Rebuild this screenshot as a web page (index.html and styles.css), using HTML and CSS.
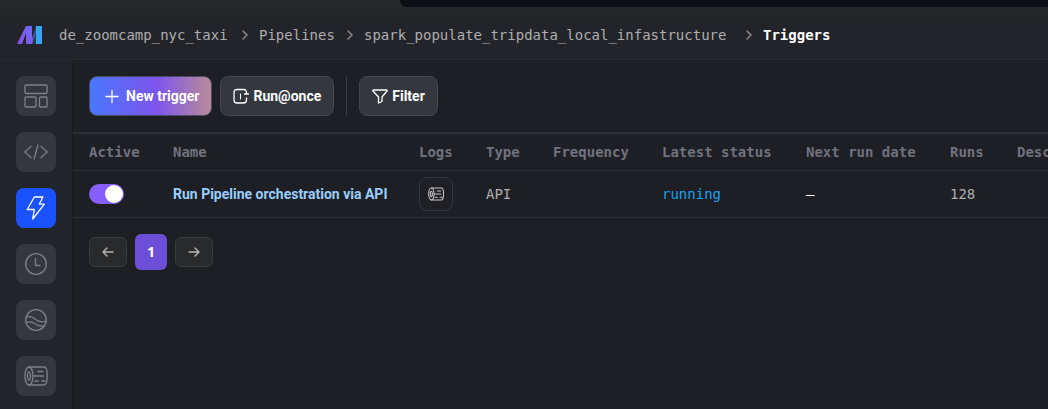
FILE: index.html
```html
<!DOCTYPE html>
<html lang="en">
<head>
<meta charset="utf-8">
<meta name="viewport" content="width=device-width, initial-scale=1">
<title>Triggers</title>
<link rel="stylesheet" href="styles.css">
</head>
<body>
<svg class="symbols" aria-hidden="true">
  <symbol id="log" viewBox="0 0 24 24">
    <ellipse cx="5" cy="12" rx="4" ry="9"/>
    <ellipse cx="5" cy="12" rx="1.500" ry="4"/>
    <path d="M5 3h15c2.600 0 3.300 4.500 3.300 9s-.7 9-3.300 9H5M14 7.500h5M9.500 12h10M11 17h3M18 17h3"/>
  </symbol>
</svg>
<div class="app">
  <div class="tabstrip"></div>
  <header class="header">
    <a class="logo" href="#" aria-label="Home">
      <svg width="26" height="20" viewBox="0 0 26 20">
        <defs>
          <linearGradient id="leg" x1="0" y1="1" x2="1" y2="0"><stop offset="0" stop-color="#8a4fe8"/><stop offset="1" stop-color="#6c6cf5"/></linearGradient>
          <linearGradient id="fold" x1="0" y1="1" x2="1" y2="0"><stop offset="0" stop-color="#7960e8"/><stop offset="1" stop-color="#28476d"/></linearGradient>
        </defs>
        <path d="M12 19 19 2v17z" fill="#293750"/>
        <path d="M14 16 19 1v8l-4 10h-3z" fill="url(#fold)"/>
        <path d="M0 19 9 1h6v18H9V8L5 19z" fill="url(#leg)"/>
        <path d="M19 1h6v18h-6z" fill="#35a6f5"/>
      </svg>
    </a>
    <nav class="crumbs" aria-label="Breadcrumb">
      <a class="crumb crumb-project" href="#">de_zoomcamp_nyc_taxi</a>
      <svg class="sep" viewBox="0 0 8 12"><path d="m2 2 4 4-4 4"/></svg>
      <a class="crumb crumb-section" href="#">Pipelines</a>
      <svg class="sep" viewBox="0 0 8 12"><path d="m2 2 4 4-4 4"/></svg>
      <a class="crumb crumb-pipeline" href="#">spark_populate_tripdata_local_infastructure</a>
      <svg class="sep" viewBox="0 0 8 12"><path d="m2 2 4 4-4 4"/></svg>
      <a class="crumb current" href="#" aria-current="page">Triggers</a>
    </nav>
  </header>
  <div class="body">
    <nav class="sidebar" aria-label="Pipeline">
      <a class="side" href="#" aria-label="Overview"><svg viewBox="0 0 24 24"><rect x="1" y="1" width="22" height="8.500" rx="1"/><rect x="1" y="13" width="11" height="10" rx="1"/><rect x="15.500" y="13" width="7.500" height="10" rx="1"/></svg></a>
      <a class="side" href="#" aria-label="Edit"><svg viewBox="0 0 24 24"><path d="M7 6.500.8 12 7 17.500M17 6.500l6.200 5.500-6.200 5.500M14 5l-4 14"/></svg></a>
      <a class="side active" href="#" aria-label="Triggers"><svg viewBox="0 0 24 24"><path d="M10.300 1h8.500l-3.500 7.200h5L8.700 23l1.600-9.500h-7z"/></svg></a>
      <a class="side" href="#" aria-label="Runs"><svg viewBox="0 0 24 24"><circle cx="12" cy="12" r="10.300"/><path d="M11.500 6.500v7H16"/></svg></a>
      <a class="side" href="#" aria-label="Backfills"><svg viewBox="0 0 24 24"><circle cx="12" cy="12" r="10.300"/><path d="M2.500 9c5-1.500 7 1 10 3s6 2.500 9.500 1M2 14.500c4-1.500 6.500-.5 9 1.200s5.500 2.800 9 2.300"/></svg></a>
      <a class="side" href="#" aria-label="Logs"><svg><use href="#log"/></svg></a>
    </nav>
    <main class="main">
      <div class="toolbar">
        <button class="btn primary" type="button"><svg viewBox="0 0 16 16"><path d="M8 2.500v12M2 8.500h12"/></svg>New trigger</button>
        <button class="btn" type="button"><svg viewBox="0 0 16 16"><path d="M13.500 6V4.500c0-2-1-3-3-3H4c-2 0-3 1-3 3v7.500c0 2 1 3 3 3h6.500c2 0 3-1 3-3V10M11.500 6h4z"/><path d="M7.500 6v5" stroke-width="1"/></svg>Run@once</button>
        <span class="divider"></span>
        <button class="btn" type="button"><svg viewBox="0 0 16 16"><path d="M1 2h14v1l-5 6v4.500L6.500 15V9L1 3z"/></svg>Filter</button>
      </div>
      <div class="table-wrap">
        <table class="table">
          <colgroup><col class="c-active"><col class="c-name"><col class="c-small"><col class="c-small"><col class="c-freq"><col class="c-wide"><col class="c-wide"><col class="c-small"><col></colgroup>
          <thead><tr><th>Active</th><th>Name</th><th>Logs</th><th>Type</th><th>Frequency</th><th>Latest status</th><th>Next run date</th><th>Runs</th><th>Description</th></tr></thead>
          <tbody><tr>
            <td><input class="switch" type="checkbox" role="switch" aria-label="Active" checked></td>
            <td><a class="name" href="#">Run Pipeline orchestration via API</a></td>
            <td><button class="log-btn" type="button" aria-label="View logs"><svg><use href="#log"/></svg></button></td>
            <td>API</td><td></td><td class="running">running</td><td class="dash">–</td><td>128</td><td></td>
          </tr></tbody>
        </table>
      </div>
      <nav class="pager" aria-label="Pages">
        <button class="arrow" type="button" aria-label="Previous page"><svg viewBox="0 0 14 14"><path d="M12 7H2M6 3 2 7l4 4"/></svg></button>
        <button class="page" type="button" aria-current="page">1</button>
        <button class="arrow" type="button" aria-label="Next page"><svg viewBox="0 0 14 14"><path d="M2 7h10M8 3l4 4-4 4"/></svg></button>
      </nav>
    </main>
  </div>
</div>
</body>
</html>
```
FILE: styles.css
```css
* { box-sizing: border-box; }
body {
  margin: 0;
  background: #1e1f24;
  color: #aeaeb0;
  font: 14px/20px "DejaVu Sans Mono", monospace;
  overflow: hidden;
}
a { color: inherit; text-decoration: none; }
button { font: inherit; color: inherit; cursor: pointer; }
svg { display: block; fill: none; stroke: currentColor; stroke-linecap: round; stroke-linejoin: round; }
.symbols { position: absolute; width: 0; height: 0; }
.app { position: relative; min-height: 100vh; display: flex; flex-direction: column; }
.tabstrip {
  position: absolute;
  top: 0;
  left: 400px;
  right: 0;
  height: 7px;
  background: #0e0f14;
  border-bottom-left-radius: 6px;
}
.header {
  display: flex;
  align-items: center;
  gap: 16px;
  padding: 25px 16px 14px 17px;
  background: linear-gradient(#242a2d, #232429 24px);
  border-bottom: 1px solid #2a2b30;
}
.logo svg { stroke: none; }
.crumbs { display: flex; align-items: center; gap: 10px; white-space: nowrap; }
.crumb-project { min-width: 172px; }
.crumb-section { min-width: 77px; }
.crumb-pipeline { min-width: 371px; }
.sep { width: 8px; height: 12px; flex: none; stroke: #85868b; stroke-width: 1.6; }
.current { color: #fff; font-weight: bold; }
.body { flex: 1; display: flex; }
.sidebar {
  flex: none;
  display: flex;
  flex-direction: column;
  gap: 16px;
  padding: 16px 16px 12px;
  background: #232429;
  border-right: 1px solid #1a1b1f;
}
.side {
  display: grid;
  place-items: center;
  width: 40px;
  height: 40px;
  border-radius: 8px;
  background: #35373f;
  color: #7e8085;
}
.side svg { width: 24px; height: 24px; stroke-width: 1.3; }
.active { background: #1a52ff; color: #fff; }
.main { flex: 1; min-width: 0; }
.toolbar { display: flex; gap: 8px; padding: 16px; }
.btn {
  display: flex;
  align-items: center;
  gap: 4px;
  height: 40px;
  padding: 0 12px;
  border: 1px solid #44464e;
  border-radius: 8px;
  background: #35373f;
  color: #fff;
  font: bold 14px/20px Roboto, sans-serif;
}
.btn svg { width: 16px; height: 16px; stroke-width: 1.3; }
.primary {
  gap: 6px;
  padding: 0 12px 0 14px;
  border-color: #4b4c64;
  background: linear-gradient(90deg, #4877ff, #7d55ec 55%, #b98d96) border-box;
}
.divider { width: 1px; background: #393b42; margin: 0 4px; }
.table-wrap { overflow: hidden; border-top: 2px solid #2e3036; }
.table { width: 100%; table-layout: fixed; border-collapse: separate; border-spacing: 0; }
.c-active { width: 84px; }
.c-name { width: 246px; }
.c-small { width: 67px; }
.c-freq { width: 109px; }
.c-wide { width: 144px; }
.table th, .table td {
  padding: 0 0 0 16px;
  border-bottom: 1px solid #2e3036;
  text-align: left;
  white-space: nowrap;
}
.table th { height: 37px; color: #70727e; }
.table td { height: 47px; }
.switch {
  appearance: none;
  display: flex;
  align-items: center;
  justify-content: flex-end;
  width: 35px;
  height: 20px;
  margin: 0;
  padding: 1px;
  border-radius: 10px;
  background: #885eff;
}
.switch::before { content: ""; width: 18px; height: 18px; border-radius: 50%; background: #fff; }
.name { color: #99ceff; font: bold 14px/20px Roboto, sans-serif; }
.log-btn {
  display: grid;
  place-items: center;
  width: 34px;
  height: 34px;
  padding: 0;
  border: 1px solid #34363d;
  border-radius: 8px;
  background: transparent;
}
.log-btn svg { width: 16px; height: 16px; stroke-width: 1.6; color: #c5c5c7; }
.table .running { color: #1ba2ed; }
.table .dash { color: #fff; }
.pager { display: flex; align-items: center; gap: 8px; padding: 16px; }
.arrow, .page {
  display: grid;
  place-items: center;
  width: 38px;
  height: 30px;
  padding: 0;
  border: 1px solid #3a3c40;
  border-radius: 6px;
  background: #292a2c;
  color: #b5b5b5;
}
.arrow svg { width: 14px; height: 14px; stroke-width: 1.4; }
.page {
  width: 32px;
  height: 36px;
  border: 0;
  background: #6b50d7;
  color: #fff;
  font: bold 14px/20px "Open Sans", sans-serif;
}
```
